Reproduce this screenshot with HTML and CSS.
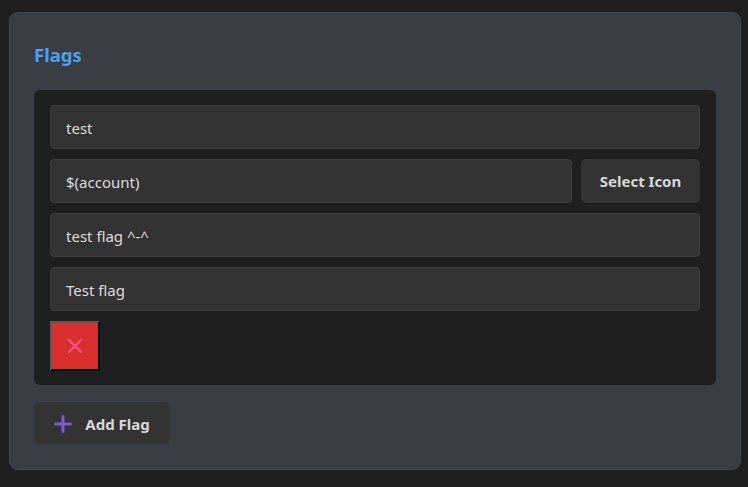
FILE: index.html
```html
<!DOCTYPE html>
<html>
<head>
<meta charset="utf-8">
<link rel="stylesheet" href="styles.css">
</head>
<body>
<div class="card">
  <h2 class="title">Flags</h2>
  <div class="panel">
    <div class="field">test</div>
    <div class="row">
      <div class="field grow">$(account)</div>
      <button class="btn select">Select Icon</button>
    </div>
    <div class="field">test flag ^-^</div>
    <div class="field">Test flag</div>
    <button class="remove" aria-label="Remove">
      <svg width="16" height="16" viewBox="0 0 16 16"><path d="M2 2 L14 14 M14 2 L2 14" stroke="#ff4f8a" stroke-width="2.2" stroke-linecap="round" fill="none"/></svg>
    </button>
  </div>
  <button class="btn add">
    <svg width="18" height="18" viewBox="0 0 18 18"><path d="M9 1.5 V16.5 M1.5 9 H16.5" stroke="#7d5ad8" stroke-width="3" stroke-linecap="round" fill="none"/></svg>
    <span>Add Flag</span>
  </button>
</div>
</body>
</html>
```
FILE: styles.css
```css
html, body {
  margin: 0;
  padding: 0;
  background: #1f1f1f;
}
body {
  font-family: "Noto Sans", "Open Sans", sans-serif;
  color: #dcdcdc;
  padding: 12px 0 0 9px;
}
.card {
  box-sizing: border-box;
  width: 732px;
  height: 458px;
  background: #3a3d42;
  border: 1px solid #43464b;
  border-radius: 9px;
  padding: 28px 24px 0 24px;
}
.title {
  margin: 0;
  font-size: 18.5px;
  font-weight: 700;
  color: #4aa3ee;
  line-height: 28px;
  height: 28px;
}
.panel {
  margin-top: 21px;
  background: #1f1f1f;
  border-radius: 6px;
  padding: 15px 16px 14px 16px;
  display: flex;
  flex-direction: column;
  gap: 10px;
  align-items: stretch;
}
.row {
  display: flex;
  gap: 10px;
}
.grow { flex: 1; }
.field {
  box-sizing: border-box;
  height: 44px;
  background: #333333;
  border: 1px solid #3d3d3d;
  border-radius: 4px;
  padding: 1px 15px 0 15px;
  display: flex;
  align-items: center;
  font-size: 15px;
  color: #dcdcdc;
}
.btn {
  font-family: inherit;
  background: #333333;
  border: none;
  border-radius: 5px;
  color: #d8d8d8;
  font-weight: 700;
  font-size: 15px;
  display: flex;
  align-items: center;
  justify-content: center;
}
.select {
  width: 119px;
  height: 44px;
  margin-left: -1px;
}
.remove {
  box-sizing: border-box;
  width: 50px;
  height: 50px;
  background: #d9302f;
  border: 2px solid;
  border-color: #5a5a5a #000 #000 #5a5a5a;
  display: flex;
  align-items: center;
  justify-content: center;
  padding: 0;
  align-self: flex-start;
}
.add {
  margin-top: 17px;
  height: 42px;
  width: 136px;
  gap: 13px;
  padding: 2px 0 0 0;
}
.add svg { margin-top: -1px; }
```
